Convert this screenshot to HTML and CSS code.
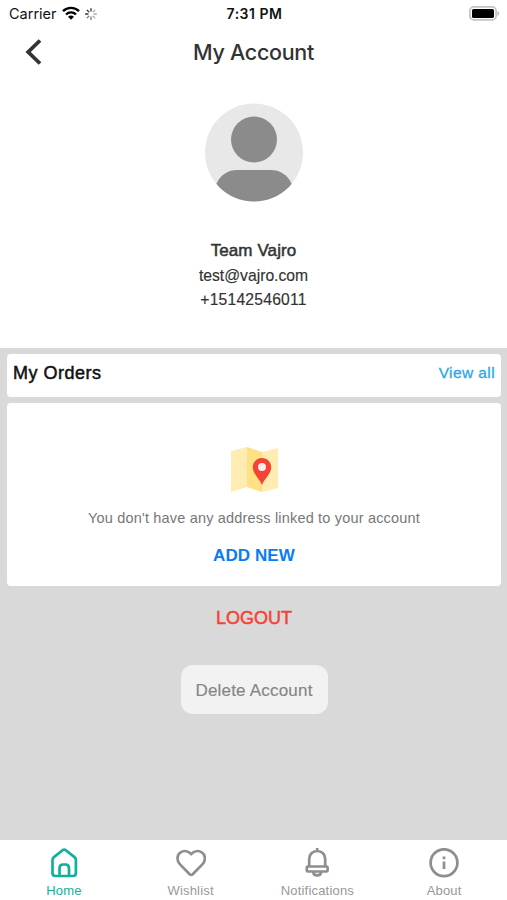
FILE: index.html
```html
<!DOCTYPE html>
<html lang="en">
<head>
<meta charset="utf-8">
<title>My Account</title>
<link rel="stylesheet" href="styles.css">
</head>
<body>
<div class="app">
  <header class="top">
    <div class="status">
      <div class="status-left">
        <span class="carrier">Carrier</span>
        <svg class="wifi" width="18" height="14" viewBox="0 0 18 14" fill="none" stroke="#000" stroke-width="2.4">
          <path d="M1 5.2C5.5.7 12.5.7 17 5.2"/><path d="M4 8.5c2.8-2.8 7.2-2.8 10 0"/><path d="M9 13.7 6 10.7c1.7-1.6 4.3-1.6 6 0z" fill="#000" stroke="none"/>
        </svg>
        <svg class="spinner" width="14" height="14" viewBox="-7 -7 14 14" stroke-width="1.3" stroke-linecap="round">
          <path stroke="#333" d="M0-3V-5.4M-2.1-2.1-3.8-3.8M-3 0H-5.4"/><path stroke="#777" d="M-2.1 2.1-3.8 3.8M0 3V5.4"/><path stroke="#aaa" d="M2.1 2.1 3.8 3.8M3 0H5.4M2.1-2.1 3.8-3.8"/>
        </svg>
      </div>
      <span class="clock">7:31 PM</span>
      <svg class="battery" width="31" height="15" viewBox="0 0 31 15">
        <rect x=".9" y=".9" width="26.2" height="13" rx="4" fill="#fff" stroke="#c4c4c4" stroke-width="1.8"/>
        <rect x="3" y="3" width="22" height="9" rx="1.6"/>
        <path d="M28.5 5c2.3.6 2.3 4.4 0 5z" fill="#bdbdbd"/>
      </svg>
    </div>
    <div class="navbar">
      <svg class="back" width="18" height="26" viewBox="0 0 18 26" fill="none" stroke="#333" stroke-width="3.8"><path d="M16 1.500 4.200 13l11.800 11.500"/></svg>
      <h1 class="title">My Account</h1>
    </div>
    <div class="profile">
      <svg class="avatar" width="98" height="98" viewBox="0 0 98 98">
        <defs><clipPath id="disc"><circle cx="49" cy="48.500" r="49"/></clipPath></defs>
        <circle cx="49" cy="48.500" r="49" fill="#e8e8e8"/>
        <g clip-path="url(#disc)" fill="#8b8b8b"><circle cx="49" cy="35.500" r="23"/><path d="M11.500 79.500C16 70.500 23 66 32 66h34c9 0 16 4.500 20.500 13.500v20h-75z"/></g>
      </svg>
      <div class="name"><span>Team Vajro</span></div>
      <div class="detail email"><span>test@vajro.com</span></div>
      <div class="detail phone"><span>+15142546011</span></div>
    </div>
  </header>
  <main class="content">
    <section class="card orders">
      <span class="orders-title">My Orders</span>
      <a class="view-all">View all</a>
    </section>
    <section class="card address">
      <svg class="map" width="47" height="46" viewBox="0 0 47 46">
        <path d="M0 4 16 0v40L0 45z" fill="#ffecb3"/><path d="M16 0 31 5v40L16 40z" fill="#ffe082"/><path d="M31 5 47 1v40l-16 4z" fill="#ffecb3"/>
        <path d="M31 11c-5.200 0-9.200 4-9.200 9.200 0 6.800 6.600 11 9.200 17.800 2.600-6.800 9.200-11 9.200-17.800C40.200 15 36.200 11 31 11z" fill="#f44336"/><circle cx="31" cy="20" r="4" fill="#ffebee"/>
      </svg>
      <p class="empty"><span>You don't have any address linked to your account</span></p>
      <a class="add"><span>ADD NEW</span></a>
    </section>
    <a class="logout"><span>LOGOUT</span></a>
    <button class="delete"><span>Delete Account</span></button>
  </main>
  <nav class="tabs">
    <a class="tab active">
      <svg width="30" height="30" viewBox="0 0 30 30"><path d="M3.500 12.200Q3.500 10.300 4.900 9.100L13.600 2.200Q15.200 1 16.800 2.200L25.500 9.100Q26.900 10.300 26.900 12.200V25Q26.900 28 23.900 28H6.500Q3.500 28 3.500 25Z"/><path d="M10.500 28V20.500Q10.500 16.500 14 16.500H16.500Q20 16.500 20 20.500V28"/></svg>
      <span>Home</span>
    </a>
    <a class="tab">
      <svg width="30" height="30" viewBox="0 0 30 30"><path d="M13.700 26.300 4 16.400C.5 12.800.8 7 4.300 4.600 7.800 2.300 12.300 2.900 15.200 6.200 18.100 2.900 22.600 2.300 26.100 4.600 29.600 7 29.900 12.800 26.400 16.400L16.700 26.300Q15.200 27.600 13.700 26.300Z"/></svg>
      <span>Wishlist</span>
    </a>
    <a class="tab">
      <svg width="30" height="30" viewBox="0 0 30 30"><path d="M15.200 0V3M7.200 18.500V11C7.200 6.300 10.500 3 15.200 3s8 3.300 8 8v7.500"/><rect x="4.800" y="18.500" width="20.800" height="5" rx="1"/><path d="M11.200 24c.6 4.500 7.400 4.500 8 0"/></svg>
      <span>Notifications</span>
    </a>
    <a class="tab">
      <svg width="30" height="30" viewBox="0 0 30 30"><circle cx="15" cy="14.700" r="13.400"/><path d="M15 13.500V21M15 8.500v2.800"/></svg>
      <span>About</span>
    </a>
  </nav>
</div>
</body>
</html>
```
FILE: styles.css
```css
* { box-sizing: border-box; }
body { margin: 0; font-family: "Liberation Sans", Arial, sans-serif; color: #333; }
h1, p { margin: 0; font-weight: 400; }
.app { height: 900px; display: flex; flex-direction: column; background: #fff; }
.top { height: 348px; }

.status { height: 28px; display: grid; grid-template-columns: 1fr auto 1fr; align-items: center; padding: 0 7px 0 9px; font-family: Inter, sans-serif; color: #111; }
.status-left { display: flex; align-items: center; margin-top: -1px; }
.carrier { font-size: 14.5px; width: 53px; }
.wifi { margin-top: -1px; }
.spinner { margin-left: 4px; }
.clock { font-size: 14px; font-weight: 600; letter-spacing: .5px; margin: -2px 0 0; }
.battery { justify-self: end; margin-top: -2px; }

.navbar { height: 48px; display: grid; grid-template-columns: 58px 1fr 58px; align-items: center; }
.back { margin-left: 24px; }
.title { font-family: Inter, sans-serif; font-size: 21.500px; font-weight: 500; letter-spacing: -.3px; text-align: center; }

.profile { display: flex; flex-direction: column; align-items: center; padding-top: 28px; }
.avatar { overflow: visible; }
.name { margin-top: 37px; height: 24px; line-height: 24px; font-size: 17px; letter-spacing: .1px; -webkit-text-stroke: .5px; }
.detail { height: 24px; line-height: 24px; font-size: 15.700px; -webkit-text-stroke: .15px; }
.email { margin-top: 1px; }
.phone { letter-spacing: .2px; }

.content { flex: 1; background: #d9d9d9; padding: 6px 6px 0 7px; display: flex; flex-direction: column; align-items: center; }
.card { width: 100%; background: #fff; border-radius: 4px; }
.orders { height: 43px; padding: 0 6px; display: flex; justify-content: space-between; line-height: 38px; }
.orders-title { font-size: 18px; color: #111; letter-spacing: .5px; -webkit-text-stroke: .5px; }
.view-all { font-size: 15.500px; color: #2ba6f0; letter-spacing: .4px; -webkit-text-stroke: .3px; }
.address { margin-top: 6px; height: 183px; padding-top: 44px; display: flex; flex-direction: column; align-items: center; }
.empty { margin-top: 15px; line-height: 20px; font-size: 14.500px; letter-spacing: .18px; color: #777; }
.add { margin-top: 18px; line-height: 20px; font-size: 17px; font-weight: 700; letter-spacing: .1px; color: #087cf5; }
.logout { margin-top: 21px; line-height: 22px; font-size: 18px; color: #f44336; -webkit-text-stroke: .5px; }
.delete { margin: 36px 0 0; width: 147px; height: 49px; border: 0; border-radius: 12px; background: #f2f2f2; color: #858585; font: 17px "Liberation Sans", sans-serif; letter-spacing: .2px; padding: 2px 0 0; -webkit-text-stroke: .15px; }

.tabs { height: 60px; display: grid; grid-template-columns: repeat(4, 1fr); background: #fff; }
.tab { display: flex; flex-direction: column; align-items: center; padding: 8px 0 0 1px; color: #999; font-size: 13px; letter-spacing: .2px; line-height: 16px; }
.tab svg { fill: none; stroke: #8e8e8e; stroke-width: 2.700; stroke-linejoin: round; margin-bottom: 5px; flex: none; }
.tab.active { color: #12b09c; }
.tab.active svg { stroke: #12b09c; }
```
